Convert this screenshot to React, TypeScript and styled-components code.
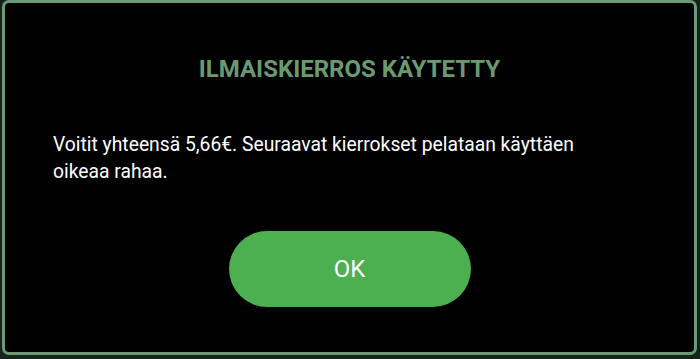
import React from "react";
import styled, { createGlobalStyle } from "styled-components";

const Global = createGlobalStyle`
  html, body { margin: 0; padding: 0; background: #16231a; }
  body { font-family: Roboto, "Noto Sans", sans-serif; }
`;

const Page = styled.div`
  width: 700px;
  height: 359px;
  box-sizing: border-box;
  padding: 0 3px 4px 2px;
  background: #16231a;
  display: flex;
`;

const Dialog = styled.div`
  flex: 1;
  box-sizing: border-box;
  background: #000;
  border: 3px solid #6c9878;
  border-radius: 7px;
  display: flex;
  flex-direction: column;
  align-items: center;
  padding: 50px 48px 0 48px;
`;

const Title = styled.h1`
  margin: 0;
  font-family: Roboto, sans-serif;
  font-weight: 700;
  font-size: 24px;
  line-height: 32px;
  color: #6c9a70;
  letter-spacing: 0;
`;

const Message = styled.p`
  align-self: stretch;
  margin: 46px 70px 0 0;
  font-family: Roboto, sans-serif;
  font-size: 19.3px;
  line-height: 27px;
  color: #fff;
`;

const OkButton = styled.button`
  margin-top: 46px;
  width: 242px;
  height: 76px;
  border: none;
  border-radius: 38px;
  background: #4caf50;
  color: #fff;
  font-family: Roboto, sans-serif;
  font-size: 24px;
  cursor: pointer;
`;

export default function App() {
  return (
    <>
      <Global />
      <Page>
        <Dialog>
          <Title>ILMAISKIERROS KÄYTETTY</Title>
          <Message>
            Voitit yhteensä 5,66€. Seuraavat kierrokset pelataan käyttäen oikeaa rahaa.
          </Message>
          <OkButton>OK</OkButton>
        </Dialog>
      </Page>
    </>
  );
}
